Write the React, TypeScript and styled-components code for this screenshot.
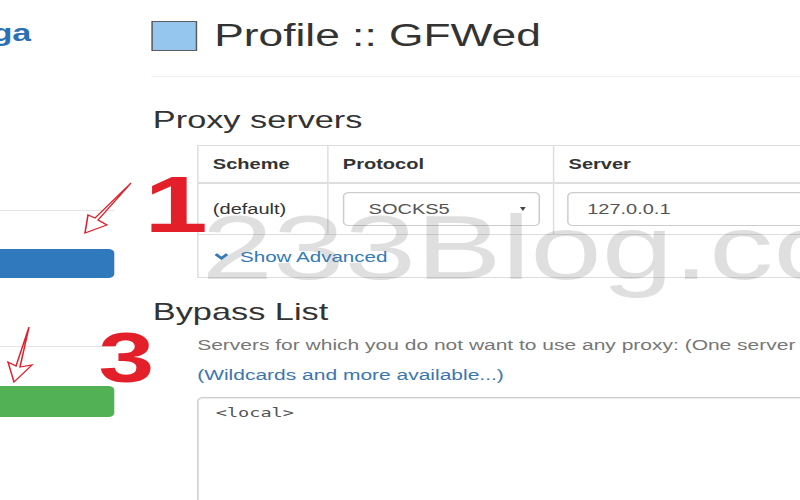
import * as React from 'react';
import styled, { createGlobalStyle } from 'styled-components';

// the screenshot is a horizontally stretched capture, so the page is laid out
// at 560px and widened to 800px
const STRETCH = 800 / 560;

const GlobalStyle = createGlobalStyle`
  html,
  body {
    margin: 0;
    padding: 0;
    background: #fff;
    overflow: hidden;
  }

  body {
    font-family: 'Liberation Sans', Arial, sans-serif;
    font-size: 14px;
    line-height: 20px;
    color: #333;
  }
`;

const Stage = styled.div`
  position: relative;
  display: flex;
  width: 560px;
  height: 500px;
  overflow: hidden;
  transform: scaleX(${STRETCH});
  transform-origin: 0 0;
`;

const Nav = {
  Container: styled.aside`
    flex: 0 0 106px;
    display: flex;
    flex-direction: column;
  `,

  Brand: styled.div`
    display: flex;
    justify-content: flex-end;
    width: 22px;
    margin-top: 20px;
    overflow: hidden;
    white-space: nowrap;
    font-size: 24px;
    line-height: 26px;
    font-weight: bold;
    color: #2d6fb3;
  `,

  Divider: styled.div<{ $gap: number }>`
    width: 80px;
    margin-top: ${(p) => p.$gap}px;
    border-top: 1px solid #e3e3e3;
  `,

  Button: styled.div<{ $color: string; $gap: number; $height: number }>`
    width: 80px;
    height: ${(p) => p.$height}px;
    margin-top: ${(p) => p.$gap}px;
    border-radius: 0 4px 4px 0;
    background: ${(p) => p.$color};
  `,
};

const Main = styled.main`
  flex: 1;
  min-width: 0;
  display: flex;
  flex-direction: column;
`;

const Header = {
  Container: styled.div`
    display: flex;
    align-items: center;
    height: 34px;
    margin-top: 19px;
  `,

  Swatch: styled.span`
    box-sizing: border-box;
    width: 32px;
    height: 30px;
    border: 1px solid #5b5b5b;
    background: #94c6ee;
  `,

  Title: styled.h1`
    margin: 0 0 0 12px;
    font-size: 31px;
    line-height: 34px;
    font-weight: normal;
    white-space: nowrap;
  `,
};

const Rule = styled.div`
  margin-top: 23px;
  border-top: 1px solid #eee;
`;

const SectionTitle = styled.h3<{ $gap: number }>`
  margin: ${(p) => p.$gap}px 0 0 1px;
  font-size: 24px;
  line-height: 26px;
  font-weight: normal;
`;

const Indented = styled.div`
  width: 482px;
  margin-left: 32px;
`;

const Table = {
  Root: styled.table`
    width: 100%;
    margin-top: 12px;
    border-collapse: collapse;
    table-layout: fixed;
  `,

  HeadCell: styled.th<{ $width?: number }>`
    box-sizing: border-box;
    width: ${(p) => (p.$width ? `${p.$width}px` : 'auto')};
    padding: 8px 10px;
    border: 1px solid #ddd;
    border-bottom-width: 2px;
    text-align: left;
    font-weight: bold;
  `,

  Cell: styled.td<{ $pad?: string }>`
    padding: ${(p) => p.$pad || '8px 10px'};
    border: 1px solid #ddd;
    vertical-align: middle;
    white-space: nowrap;
  `,
};

const Field = styled.div`
  box-sizing: border-box;
  display: flex;
  align-items: center;
  height: 34px;
  padding: 0 13px;
  border: 1px solid #ccc;
  border-radius: 4px;
  background: #fff;
  color: #555;
  box-shadow: inset 0 1px 1px rgba(0, 0, 0, 0.06);
`;

const Select = styled(Field)`
  justify-content: space-between;
  padding: 0 9px 0 17px;
`;

const Caret = styled.span`
  width: 0;
  height: 0;
  border-left: 2.5px solid transparent;
  border-right: 2.5px solid transparent;
  border-top: 4px solid #444;
`;

const Toggle = styled.span`
  display: inline-flex;
  align-items: center;
  gap: 8px;
  font-size: 14.4px;
  color: #337ab7;
`;

const Help = styled.p<{ $link?: boolean }>`
  margin: 10px 0 0;
  white-space: nowrap;
  font-size: 14.7px;
  color: ${(p) => (p.$link ? '#3b76b1' : '#777')};
`;

const Editor = styled.div`
  box-sizing: border-box;
  height: 160px;
  margin-top: 12px;
  padding: 5px 12px;
  border: 1px solid #ccc;
  border-radius: 4px;
  box-shadow: inset 0 1px 1px rgba(0, 0, 0, 0.075);
  font-family: 'DejaVu Sans Mono', 'Liberation Mono', monospace;
  font-size: 13px;
  line-height: 20px;
  color: #555;
`;

const Watermark = styled.div`
  position: absolute;
  left: 141px;
  top: 203px;
  font-size: 90px;
  line-height: 90px;
  white-space: nowrap;
  color: rgba(110, 110, 110, 0.22);
  pointer-events: none;
`;

const Mark = styled.span<{ $x: number; $y: number; $size: number }>`
  position: absolute;
  left: ${(p) => p.$x}px;
  top: ${(p) => p.$y}px;
  font-size: ${(p) => p.$size}px;
  line-height: 1;
  font-weight: bold;
  color: #e3202a;
  pointer-events: none;
`;

const Arrows = styled.svg`
  position: absolute;
  left: 0;
  top: 0;
  pointer-events: none;
`;

const Chevron = () => (
  <svg width="10" height="7" viewBox="0 0 10 7">
    <polyline points="1,1.2 5,5.3 9,1.2" fill="none" stroke="#337ab7" strokeWidth="2.4" />
  </svg>
);

const App = () => (
  <>
    <GlobalStyle />
    <Stage>
      <Nav.Container>
        <Nav.Brand>ga</Nav.Brand>
        <Nav.Divider $gap={164} />
        <Nav.Button $color="#3079bd" $gap={38} $height={29} />
        <Nav.Divider $gap={68} />
        <Nav.Button $color="#52b155" $gap={39} $height={31} />
      </Nav.Container>

      <Main>
        <Header.Container>
          <Header.Swatch />
          <Header.Title>Profile :: GFWed</Header.Title>
        </Header.Container>
        <Rule />

        <SectionTitle $gap={30}>Proxy servers</SectionTitle>
        <Indented>
          <Table.Root>
            <thead>
              <tr>
                <Table.HeadCell $width={91}>Scheme</Table.HeadCell>
                <Table.HeadCell $width={158}>Protocol</Table.HeadCell>
                <Table.HeadCell>Server</Table.HeadCell>
              </tr>
            </thead>
            <tbody>
              <tr>
                <Table.Cell>(default)</Table.Cell>
                <Table.Cell $pad="8px 9px 8px 10px">
                  <Select>
                    SOCKS5
                    <Caret />
                  </Select>
                </Table.Cell>
                <Table.Cell $pad="8px 9px">
                  <Field>127.0.0.1</Field>
                </Table.Cell>
              </tr>
              <tr>
                <Table.Cell colSpan={3} $pad="10px 11px">
                  <Toggle>
                    <Chevron />
                    Show Advanced
                  </Toggle>
                </Table.Cell>
              </tr>
            </tbody>
          </Table.Root>
        </Indented>

        <SectionTitle $gap={21}>Bypass List</SectionTitle>
        <Indented>
          <Help>Servers for which you do not want to use any proxy: (One server on each line.)</Help>
          <Help $link>(Wildcards and more available...)</Help>
          <Editor>&lt;local&gt;</Editor>
        </Indented>
      </Main>

      <Watermark>233Blog.co</Watermark>

      <Mark $x={101} $y={165} $size={80}>
        1
      </Mark>
      <Mark $x={69} $y={323} $size={70}>
        3
      </Mark>

      <Arrows width="560" height="500" viewBox="0 0 560 500">
        <polygon
          points="91.7,183 68.6,220 74.9,225 59.5,233 61.6,215 66.5,218"
          fill="none"
          stroke="#e0202a"
          strokeWidth="1.1"
        />
        <polygon
          points="20.3,327 14,367 22.4,365 9.8,382 5.6,362 11.2,366"
          fill="none"
          stroke="#e0202a"
          strokeWidth="1.1"
        />
      </Arrows>
    </Stage>
  </>
);

export default App;
